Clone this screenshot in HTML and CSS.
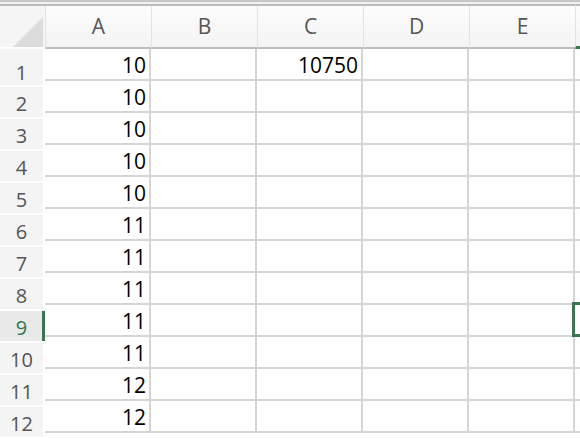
FILE: index.html
```html
<!DOCTYPE html>
<html lang="en">
<head>
  <meta charset="UTF-8" />
  <meta name="viewport" content="width=device-width, initial-scale=1.0"/>
  <title>Sheet1</title>
  <link rel="stylesheet" href="styles.css">
</head>
<body>

  <div class="sheet">
    <div class="topline"></div>

    <div class="colheads">
      <div class="corner">
        <svg width="45" height="41" viewBox="0 0 45 41">
          <polygon points="13,41 43,11 43,41" fill="#dcdcdc"/>
        </svg>
      </div>
      <div class="colhead">A</div>
      <div class="colhead">B</div>
      <div class="colhead">C</div>
      <div class="colhead">D</div>
      <div class="colhead">E</div>
      <div class="colhead sel"></div>
    </div>

    <div class="grid-body">
      <div class="rowheads" id="rowHeads"></div>
      <div class="cells" id="cells"></div>
    </div>
  </div>

  <script>
    const colA = [10, 10, 10, 10, 10, 11, 11, 11, 11, 11, 12, 12];
    const selectedRow = 9;

    const rowHeads = document.getElementById("rowHeads");
    const cells = document.getElementById("cells");

    colA.forEach((val, i) => {
      const row = i + 1;

      const head = document.createElement("div");
      head.className = "rowhead" + (row === selectedRow ? " sel" : "");
      head.textContent = row;
      rowHeads.appendChild(head);

      const values = [val, "", row === 1 ? 10750 : "", "", "", ""];
      values.forEach((v, c) => {
        const cell = document.createElement("div");
        cell.className = "cell";
        if (c === 5 && row === selectedRow) cell.classList.add("active");
        cell.textContent = v;
        cells.appendChild(cell);
      });
    });
  </script>

</body>
</html>
```

FILE: styles.css
```css
body {
  margin: 0;
  background: #fff;
  font-family: 'Open Sans', 'Liberation Sans', sans-serif;
  overflow: hidden;
}
.sheet {
  width: 580px;
  height: 438px;
  overflow: hidden;
}
.topline {
  height: 2px;
  border-top: 2px solid #c6c6c6;
  border-bottom: 2px solid #bcbcbc;
  background: #f1f1f1;
}
.colheads {
  display: flex;
  height: 43px;
  background: linear-gradient(#fcfcfc, #f3f3f3);
}
.corner {
  width: 45px;
  flex: none;
  height: 43px;
  box-sizing: border-box;
  background: #f5f5f5;
  border-bottom: 2px solid #fff;
}
.corner svg {
  display: block;
}
.colhead {
  width: 106px;
  flex: none;
  box-sizing: border-box;
  height: 43px;
  border-bottom: 2px solid #bdbdbd;
  border-left: 1px solid #e2e2e2;
  display: flex;
  align-items: center;
  justify-content: center;
  padding-bottom: 1px;
  font-size: 21px;
  color: #555;
}
.colhead.sel {
  border-bottom: 3px solid #3a7651;
  height: 44px;
  margin-top: -1px;
}
.grid-body {
  display: flex;
}
.rowheads {
  width: 43px;
  flex: none;
  border-right: 2px solid #fff;
  background: #f4f4f4;
}
.rowhead {
  height: 32px;
  box-sizing: border-box;
  border-bottom: 2px solid #fff;
  display: flex;
  align-items: flex-end;
  justify-content: center;
  padding-bottom: 4px;
  font-size: 20px;
  line-height: 19px;
  color: #555;
}
.rowhead:first-child {
  height: 38px;
  padding-bottom: 3px;
}
.rowhead.sel {
  position: relative;
  background: #e9e9e9;
  color: #2f7a4c;
}
.rowhead.sel::after {
  content: "";
  position: absolute;
  top: 0;
  bottom: 0;
  right: -2px;
  width: 3px;
  background: #3a7651;
}
.cells {
  display: grid;
  grid-template-columns: repeat(6, 106px);
  grid-auto-rows: 32px;
}
.cell {
  box-sizing: border-box;
  border-right: 2px solid #d5d5d5;
  border-bottom: 2px solid #d5d5d5;
  display: flex;
  align-items: flex-end;
  justify-content: flex-end;
  padding: 0 3px 3px 0;
  font-size: 21px;
  line-height: 21px;
  color: #000;
}
.cell.active {
  position: relative;
}
.cell.active::after {
  content: "";
  position: absolute;
  top: -3px;
  left: -3px;
  right: -3px;
  bottom: -2px;
  border: 3px solid #3a7651;
}
```
